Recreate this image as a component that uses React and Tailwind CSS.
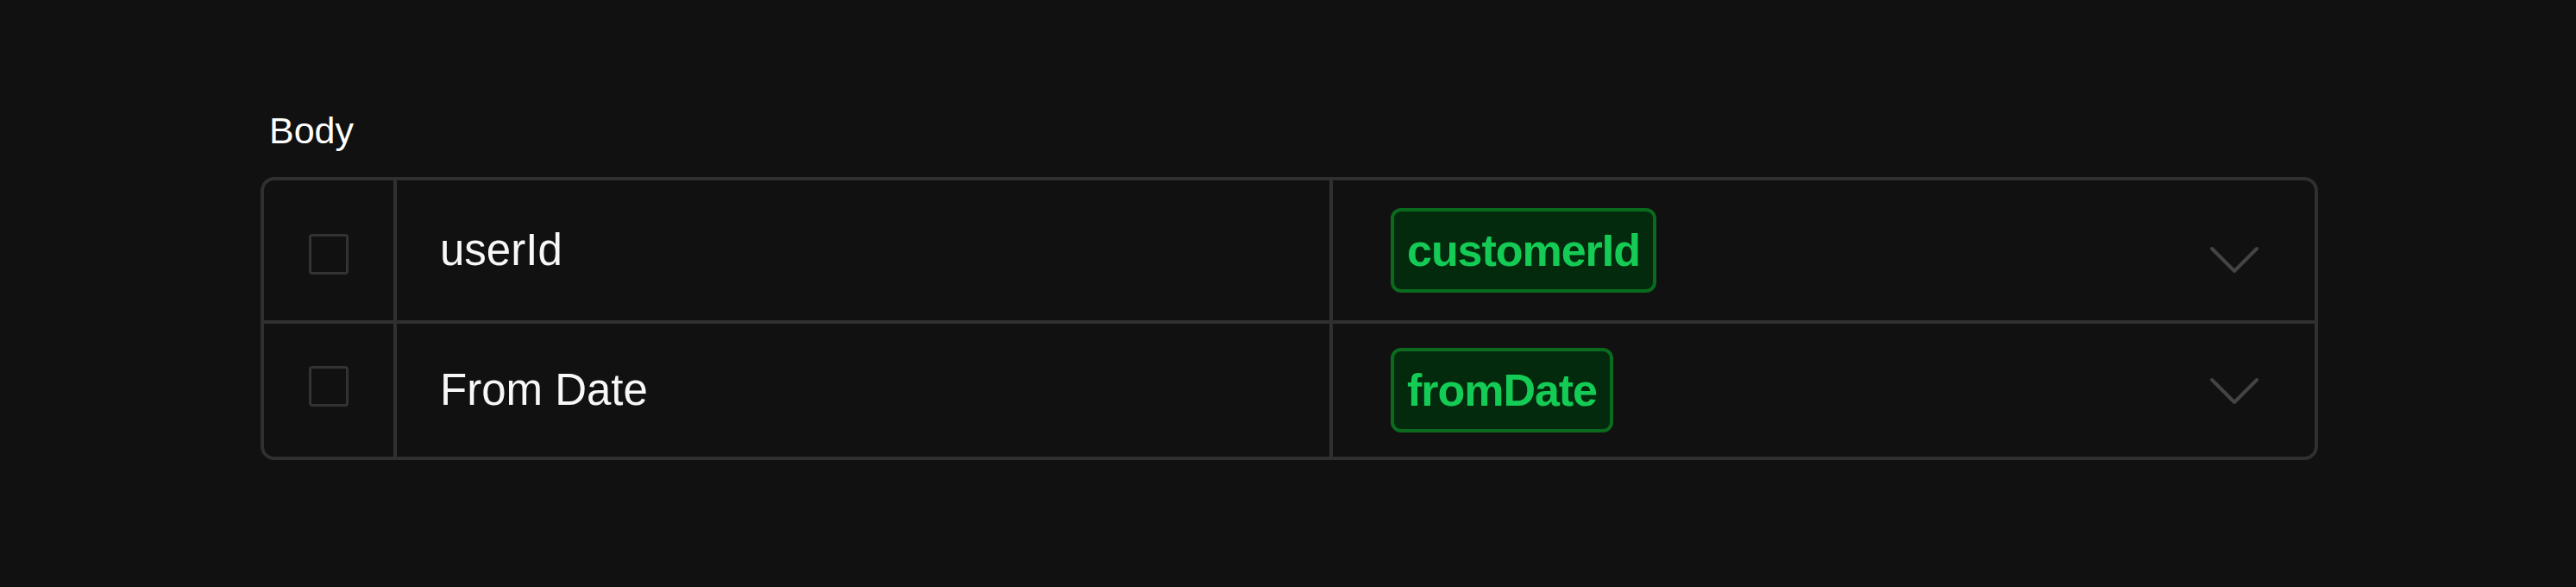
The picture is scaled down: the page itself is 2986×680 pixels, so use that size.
import React from 'react';

// ── Datos de la tabla ─────────────────────────────────────────────────────────
const rows = [
  { label: 'userId', value: 'customerId', h: 'h-[166px]', boxTop: 'mt-[62px]', chevTop: 'mt-[76px]' },
  { label: 'From Date', value: 'fromDate', h: 'h-[154px]', boxTop: 'mt-[49px]', chevTop: 'mt-[62px]' },
];

function Chevron({ className }) {
  return (
    <svg className={className} width="58" height="33" viewBox="0 0 58 33" fill="none">
      <polyline points="3,3 29,29 55,3" stroke="#444444" strokeWidth="4" strokeLinecap="round" strokeLinejoin="round" />
    </svg>
  );
}

function Row({ row, last }) {
  return (
    <div className={`flex ${row.h} ${last ? '' : 'border-b-4 border-[#303030]'}`}>
      <div className="w-[154px] shrink-0 flex justify-center border-r-4 border-[#303030]">
        <div className={`${row.boxTop} w-[46px] h-[47px] rounded-[4px] border-[3px] border-[#333333]`} />
      </div>
      <div className="w-[1085px] shrink-0 flex items-center pl-[50px] border-r-4 border-[#303030]">
        <span className="text-[51px] leading-[58px] text-[#f7f7f7]">{row.label}</span>
      </div>
      <div className="flex-1 flex justify-between pl-[67px] pr-[64px]">
        <div className="self-center rounded-[12px] border-4 border-[#0a6b1f] bg-[#032a0c] px-[15px] py-[16px]">
          <span className="block text-[52px] leading-[58px] font-bold tracking-[-0.02em] text-[#14cc55]">{row.value}</span>
        </div>
        <Chevron className={row.chevTop} />
      </div>
    </div>
  );
}

export default function App() {
  return (
    <div
      className="min-h-[680px] bg-[#111111] pt-[127px]"
      style={{ fontFamily: '"Liberation Sans", Arial, sans-serif' }}
    >
      <div className="ml-[302px] w-[2385px]">
        <div className="pl-[10px] text-[43px] leading-[48px] text-white">Body</div>
        <div className="mt-[30px] rounded-[16px] border-4 border-[#303030] overflow-hidden">
          {rows.map((r, i) => (
            <Row key={r.label} row={r} last={i === rows.length - 1} />
          ))}
        </div>
      </div>
    </div>
  );
}
